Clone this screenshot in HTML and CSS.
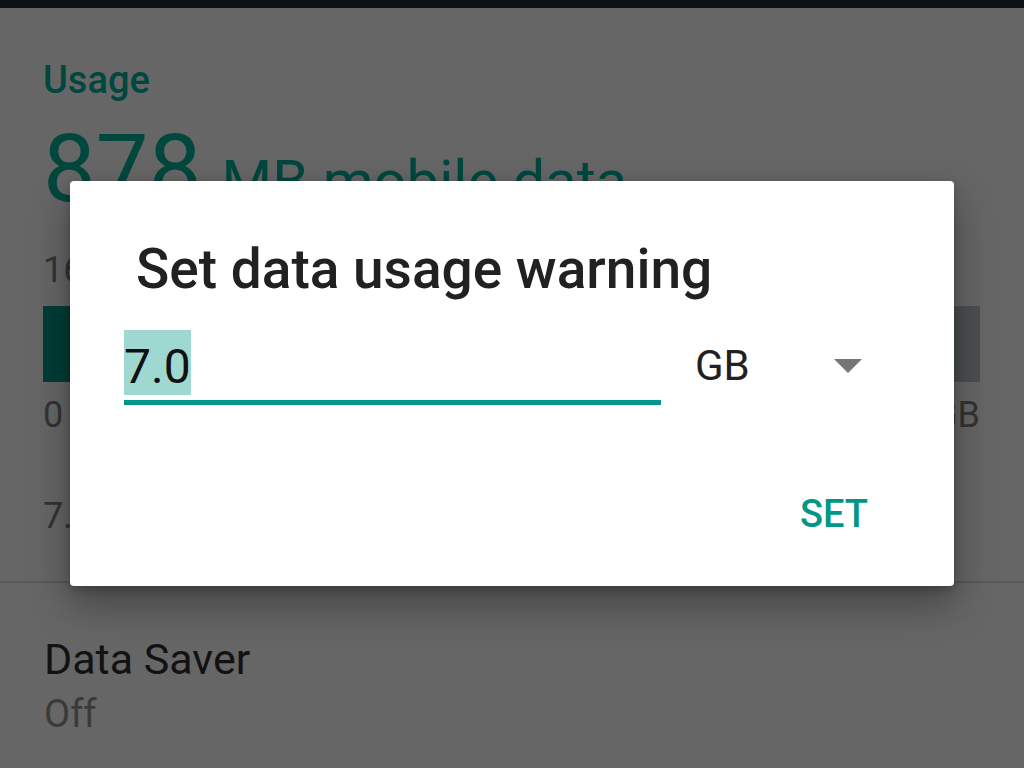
FILE: index.html
```html
<!DOCTYPE html>
<html lang="en">
<head>
    <meta charset="UTF-8">
    <meta name="viewport" content="width=device-width, initial-scale=1.0">
    <title>Data usage</title>
    <link rel="stylesheet" href="styles.css">
</head>
<body>
    <div class="status-bar"></div>

    <div class="page">
        <div class="usage-section">
            <h2 class="section-title">Usage</h2>
            <div class="usage-amount">878<span class="usage-unit">MB mobile data</span></div>
            <div class="usage-period">16 Jan – 15 Feb</div>
            <div class="usage-bar">
                <div class="usage-fill" style="width: 12%"></div>
            </div>
            <div class="usage-scale">
                <span>0</span>
                <span>16.00 GB</span>
            </div>
            <div class="usage-warning">7.0 GB data warning</div>
        </div>

        <div class="setting-item">
            <div class="setting-title">Data Saver</div>
            <div class="setting-summary">Off</div>
        </div>
    </div>

    <div class="dialog">
        <h1 class="dialog-title">Set data usage warning</h1>
        <div class="input-row">
            <div class="bytes-field">
                <span class="selected-text">7.0</span>
            </div>
            <div class="unit-select">
                <span class="unit-label">GB</span>
                <span class="dropdown-arrow"></span>
            </div>
        </div>
        <div class="dialog-actions">
            <button class="action-btn">SET</button>
        </div>
    </div>
</body>
</html>
```

FILE: styles.css
```css
* {
    margin: 0;
    padding: 0;
    box-sizing: border-box;
    font-family: Roboto, 'Noto Sans', sans-serif;
}
body {
    background-color: #666666;
    overflow: hidden;
    height: 768px;
}
.status-bar {
    height: 8px;
    background-color: #0d1115;
}
.page {
    padding-top: 51px;
}
.usage-section {
    padding: 0 44px 44px 43px;
    border-bottom: 2px solid #595959;
}
.section-title {
    font-size: 38px;
    font-weight: 500;
    line-height: 42px;
    color: #00473e;
}
.usage-amount {
    margin-top: 18px;
    font-size: 94px;
    line-height: 100px;
    color: #00473e;
    white-space: nowrap;
}
.usage-unit {
    font-size: 58px;
    line-height: 1;
    margin-left: 20px;
}
.usage-period {
    margin-top: 30px;
    font-size: 36px;
    line-height: 42px;
    color: #333333;
}
.usage-bar {
    margin-top: 15px;
    height: 76px;
    background-color: #4b4f50;
}
.usage-fill {
    height: 100%;
    background-color: #003d36;
}
.usage-scale {
    display: flex;
    justify-content: space-between;
    margin-top: 12px;
    font-size: 36px;
    line-height: 42px;
    color: #333333;
}
.usage-warning {
    margin-top: 59px;
    font-size: 36px;
    line-height: 42px;
    color: #333333;
}
.setting-item {
    padding: 53px 44px 0;
}
.setting-title {
    font-size: 43px;
    line-height: 47px;
    color: #121212;
}
.setting-summary {
    margin-top: 10px;
    font-size: 38px;
    line-height: 42px;
    color: #3a3a3a;
}
.dialog {
    position: absolute;
    left: 70px;
    top: 181px;
    width: 884px;
    height: 405px;
    background-color: #fff;
    border-radius: 4px;
    box-shadow: 0 18px 40px rgba(0, 0, 0, 0.35), 0 4px 10px rgba(0, 0, 0, 0.2);
    padding: 57px 86px 0 54px;
}
.dialog-title {
    padding-left: 12px;
    font-size: 55px;
    font-weight: 500;
    line-height: 63px;
    color: #212121;
    white-space: nowrap;
}
.input-row {
    display: flex;
    margin-top: 29px;
}
.bytes-field {
    width: 537px;
    padding-bottom: 5px;
    border-bottom: 5px solid #009688;
}
.selected-text {
    display: inline-block;
    height: 65px;
    padding-top: 8px;
    font-size: 48px;
    line-height: 57px;
    color: #111;
    background-color: #9ed8d1;
}
.unit-select {
    display: flex;
    align-items: center;
    margin: 11px 0 0 34px;
    align-self: flex-start;
}
.unit-label {
    font-size: 42px;
    line-height: 49px;
    color: #212121;
}
.dropdown-arrow {
    width: 0;
    height: 0;
    margin-left: 84px;
    border-left: 14px solid transparent;
    border-right: 14px solid transparent;
    border-top: 14px solid #757575;
}
.dialog-actions {
    display: flex;
    justify-content: flex-end;
    margin-top: 87px;
}
.action-btn {
    background: none;
    border: none;
    font-size: 38px;
    font-weight: 500;
    line-height: 45px;
    color: #009688;
    cursor: pointer;
}
```
